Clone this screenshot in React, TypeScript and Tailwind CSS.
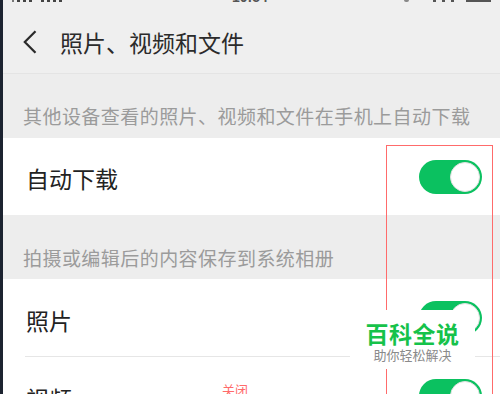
import React from "react";

function Toggle() {
  return (
    <div className="relative w-[63px] h-[34px] rounded-full bg-[#0bc160] shrink-0">
      <div className="absolute right-[2px] top-[2px] w-[30px] h-[30px] rounded-full bg-white border border-[#e0e0e0]" />
    </div>
  );
}

export default function App() {
  return (
    <div
      className="relative w-[500px] h-[394px] overflow-hidden bg-white flex"
      style={{ fontFamily: '"Noto Sans CJK SC", "Noto Sans", sans-serif' }}
    >
      <div className="w-[3px] shrink-0 bg-[#1c2330]" />
      <div className="flex-1 flex flex-col">
        {/* header */}
        <div className="shrink-0 h-[74px] bg-[#efefef] border-b border-[#e4e4e4] flex flex-col">
          <div className="shrink-0 h-[4px] overflow-hidden flex items-start px-[9px] text-[14px] leading-[14px] text-[#555]">
            <div className="flex gap-[3px]">
              <div className="w-[2px] h-[2px] bg-[#777]" />
              <div className="w-[3px] h-[2px] bg-[#444]" />
              <div className="w-[3px] h-[2px] bg-[#444]" />
              <div className="w-[3px] h-[2px] bg-[#444]" />
              <div className="w-[3px] h-[2px] bg-[#444] ml-[6px]" />
              <div className="w-[3px] h-[2px] bg-[#444]" />
              <div className="w-[3px] h-[2px] bg-[#444]" />
              <div className="w-[3px] h-[2px] bg-[#444]" />
            </div>
            <div className="ml-[170px] -mt-[10px] font-semibold" style={{ fontFamily: '"Liberation Sans", sans-serif' }}>10:54</div>
            <div className="ml-auto flex gap-[6px] items-start">
              <div className="w-[5px] h-[2px] rounded-b-full bg-[#888]" />
              <div className="ml-[18px] w-[3px] h-[2px] bg-[#555]" />
              <div className="w-[3px] h-[2px] bg-[#555]" />
              <div className="w-[3px] h-[2px] bg-[#555]" />
              <div className="ml-[6px] w-[25px] h-[2px] bg-[#555]" />
            </div>
          </div>
          <div className="shrink-0 mt-[15px] h-[46px] flex items-center pl-[20px]">
            <svg width="14" height="24" viewBox="0 0 14 24" fill="none">
              <polyline points="12.5,1.2 1.8,12 12.5,22.8" stroke="#2a2a2a" strokeWidth="2.2" strokeLinejoin="miter" />
            </svg>
            <div className="ml-[23px] text-[23px] leading-[30px] text-[#2b2b2b]">照片、视频和文件</div>
          </div>
        </div>

        {/* section 1 */}
        <div className="shrink-0 h-[64px] bg-[#ededed] pl-[20px] pt-[32px] text-[19px] leading-[19px] tracking-[0.45px] text-[#9b9b9b] whitespace-nowrap">
          其他设备查看的照片、视频和文件在手机上自动下载
        </div>
        <div className="shrink-0 h-[77px] bg-white flex items-center justify-between pl-[23px] pr-[18px]">
          <div className="text-[23px] leading-[30px] text-[#222] pt-[3px]">自动下载</div>
          <Toggle />
        </div>

        {/* section 2 */}
        <div className="shrink-0 h-[64px] bg-[#ededed] pl-[20px] pt-[33px] text-[19px] leading-[19px] tracking-[0.45px] text-[#9b9b9b] whitespace-nowrap">
          拍摄或编辑后的内容保存到系统相册
        </div>
        <div className="shrink-0 bg-white flex flex-col">
          <div className="shrink-0 h-[77px] flex items-center justify-between pl-[23px] pr-[18px]">
            <div className="text-[23px] leading-[30px] text-[#222] pt-[5px]">照片</div>
            <Toggle />
          </div>
          <div className="shrink-0 ml-[22px] h-[1px] bg-[#e6e6e6]" />
          <div className="shrink-0 h-[77px] flex items-center justify-between pl-[23px] pr-[18px]">
            <div className="text-[23px] leading-[30px] text-[#222] pt-[5px]">视频</div>
            <Toggle />
          </div>
        </div>
      </div>

      {/* annotations */}
      <div className="absolute left-[222px] top-[382px] text-[13px] leading-[16px] text-[#ff6b6b]">关闭</div>
      <div className="absolute left-[386px] top-[145px] w-[107px] h-[270px] border border-[#ff6b6b]" />
      <div className="absolute left-[350px] top-[310px] w-[125px] h-[59px] bg-white flex flex-col items-center">
        <div className="pt-[11px] text-[23px] leading-[24px] font-bold text-[#16c24a] tracking-[0.5px]">百科全说</div>
        <div className="mt-[2px] text-[13px] leading-[16px] text-[#8a8a8a]">助你轻松解决</div>
      </div>
    </div>
  );
}
